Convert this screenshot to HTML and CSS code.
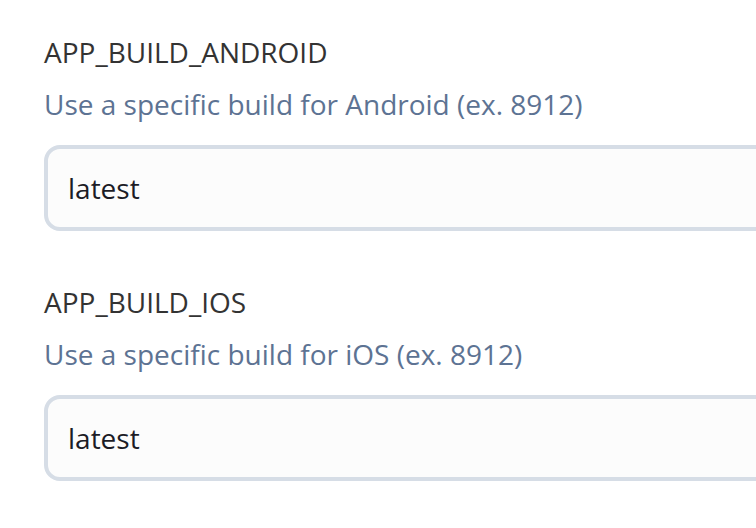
FILE: index.html
```html
<!DOCTYPE html>
<html lang="en">
<head>
<meta charset="utf-8">
<title>Build settings</title>
<link rel="stylesheet" href="styles.css">
</head>
<body>
<main class="form">
  <div class="field">
    <label class="field-label" for="android">APP_BUILD_ANDROID</label>
    <p class="field-help">Use a specific build for Android (ex. 8912)</p>
    <input class="field-input" id="android" type="text" value="latest">
  </div>
  <div class="field">
    <label class="field-label" for="ios">APP_BUILD_IOS</label>
    <p class="field-help">Use a specific build for iOS (ex. 8912)</p>
    <input class="field-input" id="ios" type="text" value="latest">
  </div>
</main>
</body>
</html>
```
FILE: styles.css
```css
html, body {
  margin: 0;
  padding: 0;
  background: #ffffff;
  overflow: hidden;
}
body {
  font-family: "Open Sans", "Noto Sans", sans-serif;
  font-size: 28px;
  line-height: 38px;
}
.form {
  display: flex;
  flex-direction: column;
  gap: 52px;
  padding: 33px 0 0 44px;
}
.field {
  display: flex;
  flex-direction: column;
}
.field-label {
  color: #333333;
  display: block;
}
.field-help {
  margin: 14px 0 22px;
  color: #5d7393;
}
.field-input {
  box-sizing: border-box;
  width: 760px;
  height: 86px;
  border: 4px solid #d6dde6;
  border-radius: 16px;
  background: #fcfcfc;
  padding: 0 20px;
  font-family: "Open Sans", "Noto Sans", sans-serif;
  font-size: 28px;
  color: #1c1c26;
  outline: none;
}
```
